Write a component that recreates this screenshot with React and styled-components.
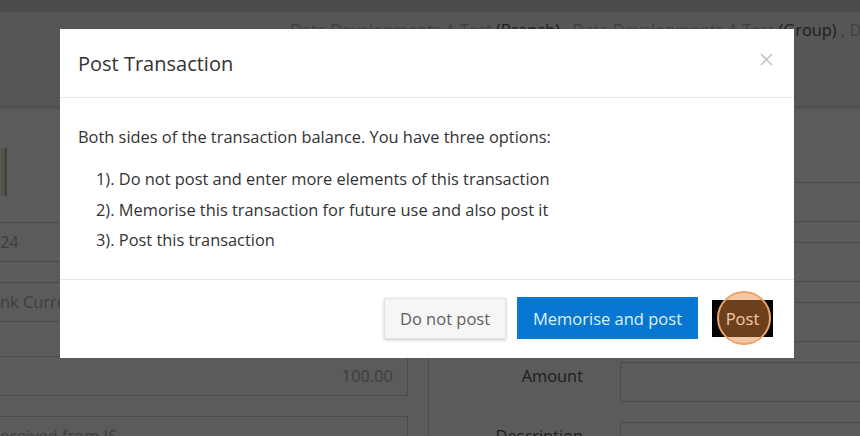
import React from 'react';
import styled, { createGlobalStyle } from 'styled-components';

const GlobalStyle = createGlobalStyle`
  html, body {
    margin: 0;
    padding: 0;
    width: 860px;
    height: 436px;
    overflow: hidden;
    background: #fff;
    font-family: "Open Sans", "Liberation Sans", sans-serif;
  }
`;

// Page behind the dialog
const Page = styled.div`
  width: 860px;
  height: 436px;
  display: flex;
  flex-direction: column;
  background: #fff;
  overflow: hidden;
`;

const TopStrip = styled.div`
  flex-shrink: 0;
  height: 12px;
  background: #d2d2d2;
`;

const CrumbBar = styled.div`
  flex-shrink: 0;
  height: 95px;
  box-sizing: border-box;
  background: #f1f1f1;
  border-bottom: 1px solid #cfcfcf;
  box-shadow: 0 2px 3px rgba(0, 0, 0, 0.12);
  padding: 6px 0 0 290px;
  white-space: nowrap;
  overflow: hidden;
  font-size: 16.4px;
  color: #b4b4b4;
`;

const CrumbKind = styled.span`
  color: #555;
`;

const Content = styled.div`
  flex-shrink: 0;
  display: flex;
  align-items: flex-start;
`;

const LeftCol = styled.div`
  width: 408px;
  flex-shrink: 0;
  padding-top: 41px;
  display: flex;
  flex-direction: column;
`;

const EdgeButton = styled.div`
  flex-shrink: 0;
  width: 4px;
  height: 48px;
  margin-left: 1px;
  border-right: 2px solid #bdb48a;
  background: #e9e4cc;
  margin-bottom: 26px;
`;

const Field = styled.div`
  flex-shrink: 0;
  height: 40px;
  box-sizing: border-box;
  border: 1px solid #cfcfcf;
  border-left: none;
  background: #fff;
  color: #b0b0b0;
  font-size: 16.4px;
  line-height: 38px;
  padding: 0 14px 0 0;
  text-align: ${p => (p.right ? 'right' : 'left')};
  margin-bottom: ${p => p.gap || 20}px;
  white-space: nowrap;
  overflow: hidden;
`;

const RightPanel = styled.div`
  flex: 1;
  margin-left: 20px;
  border-left: 1px solid #d3d3d3;
  padding-top: 75px;
  display: flex;
  flex-direction: column;
  gap: 20px;
`;

const FormRow = styled.div`
  flex-shrink: 0;
  display: grid;
  grid-template-columns: 154px 1fr;
  column-gap: 37px;
  align-items: start;
`;

const Label = styled.div`
  text-align: right;
  font-size: 16.4px;
  color: #555;
  padding-top: 2px;
`;

const Input = styled.div`
  height: 40px;
  box-sizing: border-box;
  border: 1px solid #cfcfcf;
  border-right: none;
  background: #fff;
`;

// Dialog
const Overlay = styled.div`
  position: fixed;
  inset: 0;
  background: rgba(0, 0, 0, 0.645);
  padding: 29px 0 0 60px;
`;

const Modal = styled.div`
  width: 734px;
  height: 329px;
  background: #fff;
  display: flex;
  flex-direction: column;
  color: #333;
`;

const Header = styled.div`
  flex-shrink: 0;
  height: 69px;
  box-sizing: border-box;
  border-bottom: 1px solid #e6e6e6;
  padding: 0 21px 0 18px;
  display: flex;
  align-items: center;
  justify-content: space-between;
`;

const Title = styled.h4`
  margin: 0;
  font-size: 20px;
  font-weight: 400;
  color: #333;
  padding-top: 1px;
`;

const Close = styled.button`
  border: none;
  background: none;
  padding: 0;
  margin-top: -8px;
  width: 13px;
  height: 13px;
  display: flex;
`;

const Body = styled.div`
  flex: 1;
  padding: 28px 18px 0;
  font-size: 16.4px;
  line-height: 22px;
`;

const Options = styled.ol`
  list-style: none;
  margin: 16px 0 0;
  padding: 0 0 0 18px;
  line-height: 30.5px;
`;

const Footer = styled.div`
  flex-shrink: 0;
  height: 79px;
  box-sizing: border-box;
  border-top: 1px solid #e6e6e6;
  padding: 0 21px 2px;
  display: flex;
  align-items: center;
  justify-content: flex-end;
`;

const Btn = styled.button`
  position: relative;
  font-family: inherit;
  font-size: 16.5px;
  border-radius: 0;
  cursor: pointer;
  padding: 0;
  margin-left: ${p => p.gap || 0}px;

  ${p => p.variant === 'default' && `
    width: 122px;
    height: 41px;
    background: #f6f6f6;
    border: 1px solid #e2e2e2;
    box-shadow: 0 1px 3px rgba(0, 0, 0, 0.22);
    color: #5e5e5e;
  `}

  ${p => p.variant === 'primary' && `
    width: 181px;
    height: 42px;
    background: #0877d2;
    border: 1px solid #0a7ad6;
    color: #dcf2ff;
  `}

  ${p => p.variant === 'dark' && `
    width: 61px;
    height: 37px;
    background: #050505;
    border: 1px solid #000;
    color: #fff;
  `}
`;

const ClickMark = styled.span`
  position: absolute;
  left: 50%;
  top: 50%;
  width: 50px;
  height: 50px;
  margin: -27px 0 0 -26px;
  border-radius: 50%;
  border: 2px solid #eba46a;
  background: rgba(232, 136, 56, 0.46);
  pointer-events: none;
`;

const BtnText = styled.span`
  position: relative;
`;

const App = () => (
  <>
    <GlobalStyle />
    <Page>
      <TopStrip />
      <CrumbBar>
        Data Developments A Test <CrumbKind>(Branch)</CrumbKind> , Data Developments A Test{' '}
        <CrumbKind>(Group)</CrumbKind> , Data Developments A Test (Company)
      </CrumbBar>
      <Content>
        <LeftCol>
          <EdgeButton />
          <Field>24</Field>
          <Field gap={34}>nk Current Account</Field>
          <Field right>100.00</Field>
          <Field>eceived from IS</Field>
        </LeftCol>
        <RightPanel>
          <FormRow>
            <Label>Date</Label>
            <Input />
          </FormRow>
          <FormRow>
            <Label>Account</Label>
            <Input />
          </FormRow>
          <FormRow>
            <Label>Reference</Label>
            <Input />
          </FormRow>
          <FormRow>
            <Label>Amount</Label>
            <Input />
          </FormRow>
          <FormRow>
            <Label>Description</Label>
            <Input />
          </FormRow>
        </RightPanel>
      </Content>
    </Page>

    <Overlay>
      <Modal>
        <Header>
          <Title>Post Transaction</Title>
          <Close aria-label="Close">
            <svg width="13" height="13" viewBox="0 0 13 13">
              <path d="M1 1 L12 12 M12 1 L1 12" stroke="#c6c6c6" strokeWidth="1.6" />
            </svg>
          </Close>
        </Header>
        <Body>
          Both sides of the transaction balance. You have three options:
          <Options>
            <li>1). Do not post and enter more elements of this transaction</li>
            <li>2). Memorise this transaction for future use and also post it</li>
            <li>3). Post this transaction</li>
          </Options>
        </Body>
        <Footer>
          <Btn variant="default">Do not post</Btn>
          <Btn variant="primary" gap={11}>Memorise and post</Btn>
          <Btn variant="dark" gap={14}>
            <BtnText>Post</BtnText>
            <ClickMark />
          </Btn>
        </Footer>
      </Modal>
    </Overlay>
  </>
);

export default App;
